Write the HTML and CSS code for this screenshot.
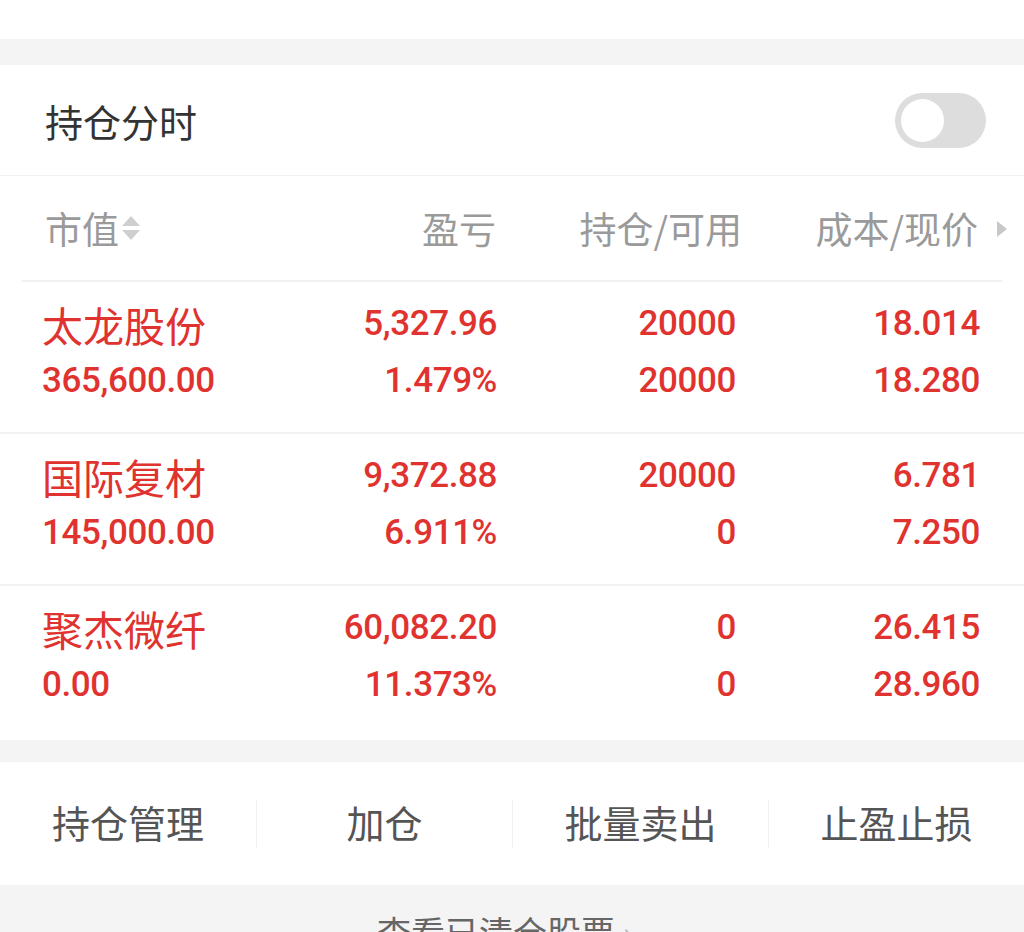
FILE: index.html
```html
<!DOCTYPE html>
<html lang="zh-CN">
<head>
<meta charset="utf-8">
<link rel="stylesheet" href="styles.css">
</head>
<body>
<div class="top"></div>
<div class="gap gap-1"></div>
<section class="card">
  <div class="toggle-row">
    <span class="toggle-title">持仓分时</span>
    <span class="switch"><span class="knob"></span></span>
  </div>
  <div class="head">
    <span class="h-cell h-left">市值<svg class="sort" width="22" height="28" viewBox="0 0 22 28"><path d="M11 2 L20 12 L2 12 Z" fill="#cfcfcf"/><path d="M2 16 L20 16 L11 26 Z" fill="#cfcfcf"/></svg></span>
    <span class="h-cell">盈亏</span>
    <span class="h-cell">持仓/可用</span>
    <span class="h-cell">成本/现价</span>
    <span class="h-arrow"><svg width="12" height="18" viewBox="0 0 12 18"><path d="M1 1 L11 9 L1 17 Z" fill="#c8c8c8"/></svg></span>
  </div>
  <div class="row">
    <span class="c name">太龙股份</span><span class="c">5,327.96</span><span class="c">20000</span><span class="c">18.014</span>
    <span class="c left num">365,600.00</span><span class="c">1.479%</span><span class="c">20000</span><span class="c">18.280</span>
  </div>
  <div class="row">
    <span class="c name">国际复材</span><span class="c">9,372.88</span><span class="c">20000</span><span class="c">6.781</span>
    <span class="c left num">145,000.00</span><span class="c">6.911%</span><span class="c">0</span><span class="c">7.250</span>
  </div>
  <div class="row last">
    <span class="c name">聚杰微纤</span><span class="c">60,082.20</span><span class="c">0</span><span class="c">26.415</span>
    <span class="c left num">0.00</span><span class="c">11.373%</span><span class="c">0</span><span class="c">28.960</span>
  </div>
</section>
<div class="gap gap-2"></div>
<nav class="actions">
  <span class="act">持仓管理</span>
  <span class="act">加仓</span>
  <span class="act">批量卖出</span>
  <span class="act">止盈止损</span>
</nav>
<div class="footer">
  <span class="footer-link">查看已清仓股票 <span class="chev">›</span></span>
</div>
</body>
</html>
```
FILE: styles.css
```css
html, body {
  margin: 0;
  padding: 0;
  background: #ffffff;
  font-family: "Noto Sans CJK SC", "Noto Sans", sans-serif;
  width: 1024px;
  overflow: hidden;
}
.top {
  height: 39px;
  background: #fff;
}
.gap {
  background: #f4f4f4;
}
.gap-1 { height: 26px; }
.gap-2 { height: 22px; }
.card {
  background: #fff;
}
.toggle-row {
  height: 110px;
  display: flex;
  align-items: center;
  justify-content: space-between;
  padding: 0 38px 0 45px;
  border-bottom: 1px solid #f1f1f1;
}
.toggle-title {
  font-size: 38px;
  color: #333;
  line-height: 1;
  margin-top: 1px;
}
.switch {
  width: 91px;
  height: 55px;
  border-radius: 28px;
  background: #dddddd;
  display: flex;
  align-items: center;
  padding-left: 6px;
  box-sizing: border-box;
}
.knob {
  width: 43px;
  height: 43px;
  border-radius: 50%;
  background: #fff;
}
.head {
  height: 104px;
  margin: 0 22px 0 22px;
  border-bottom: 2px solid #f1f1f1;
  display: grid;
  grid-template-columns: 214px 237px 246px 236px 1fr;
  padding-left: 23px;
  align-items: center;
  color: #9a9a9a;
  font-size: 37px;
}
.h-cell {
  text-align: right;
  line-height: 1;
  padding-top: 0;
}
.h-left {
  text-align: left;
  display: flex;
  align-items: center;
}
.sort {
  margin-left: 1px;
}
.h-arrow {
  display: flex;
  align-items: center;
  padding-left: 18px;
  padding-top: 2px;
}
.row {
  display: grid;
  grid-template-columns: 218px 237px 239px 244px;
  grid-auto-rows: 57px;
  padding: 13px 0 23px 42px;
  border-bottom: 2px solid #f2f2f2;
  color: #e0332f;
  font-family: Roboto, "Noto Sans CJK SC", sans-serif;
  font-weight: 500;
  font-size: 35px;
  letter-spacing: -0.4px;
  align-items: center;
}
.row.last {
  border-bottom: none;
  padding-bottom: 27px;
}
.c {
  text-align: right;
  line-height: 1;
}
.c.name {
  text-align: left;
  font-family: "Noto Sans CJK SC", sans-serif;
  font-weight: 400;
  font-size: 41px;
  letter-spacing: 0;
  margin-top: 2px;
}
.c.left {
  text-align: left;
}
.actions {
  height: 123px;
  display: grid;
  grid-template-columns: repeat(4, 1fr);
  align-items: center;
  background: #fff;
}
.act {
  text-align: center;
  font-size: 38px;
  color: #555;
  line-height: 1;
  border-left: 1px solid #f0f0f0;
  padding: 3px 0 7px;
}
.act:first-child {
  border-left: none;
}
.footer {
  background: #f4f4f4;
  height: 60px;
  text-align: center;
  padding-top: 30px;
  box-sizing: content-box;
}
.footer-link {
  font-size: 34px;
  color: #666;
  line-height: 1;
  margin-left: -14px;
}
.chev {
  color: #bbb;
}
```
